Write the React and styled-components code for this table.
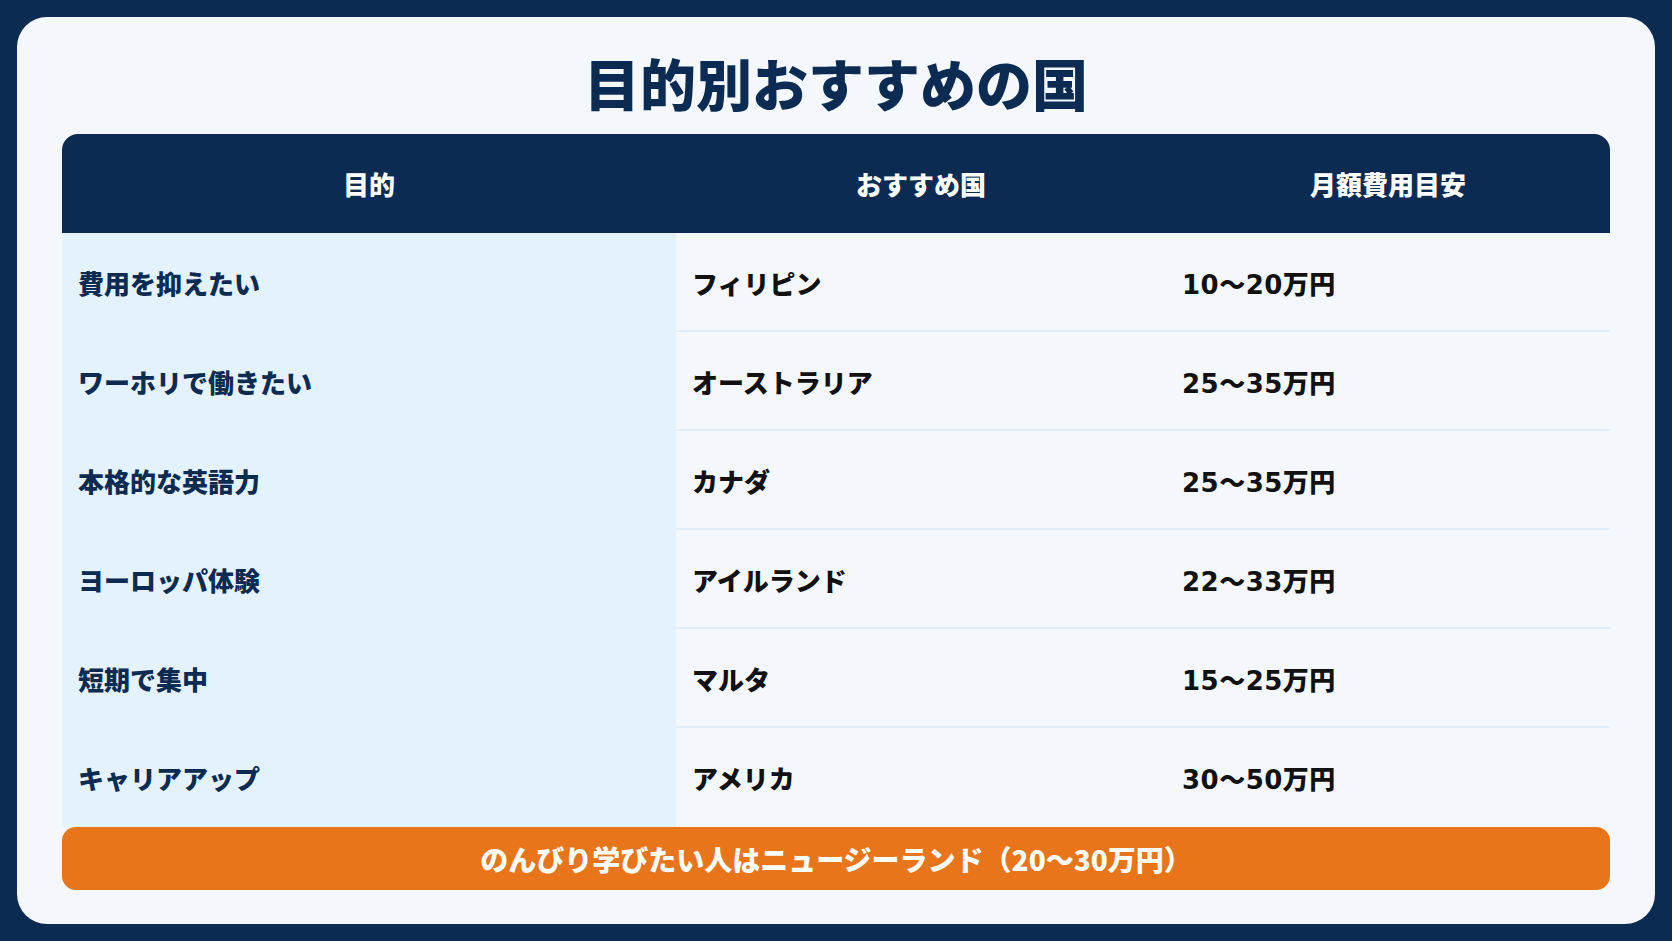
import React from "react";
import styled, { createGlobalStyle } from "styled-components";

const navy = "#0b2b52";

const GlobalStyle = createGlobalStyle`
  html, body {
    margin: 0;
    padding: 0;
    background: ${navy};
  }
  body {
    font-family: "Noto Sans CJK JP", "Noto Sans", sans-serif;
  }
  * {
    box-sizing: border-box;
  }
`;

const Page = styled.div`
  width: 1672px;
  height: 941px;
  padding: 17px;
  background: ${navy};
`;

const Card = styled.section`
  height: 100%;
  background: #f4f8fc;
  border-radius: 30px;
  padding: 31px 45px 34px;
  display: flex;
  flex-direction: column;
`;

const Title = styled.h1`
  margin: 0 0 19px;
  height: 67px;
  line-height: 67px;
  text-align: center;
  font-size: 56px;
  font-weight: 900;
  color: ${navy};
`;

const Table = styled.div`
  display: grid;
  grid-template-columns: 614px 490px 1fr;
  grid-auto-rows: 99px;
`;

const HeadCell = styled.div`
  background: ${navy};
  color: #fff;
  font-size: 26px;
  font-weight: 900;
  display: flex;
  align-items: center;
  justify-content: center;
  border-radius: ${({ $pos }) =>
    $pos === "first" ? "16px 0 0 0" : $pos === "last" ? "0 16px 0 0" : "0"};
`;

const Cell = styled.div`
  display: flex;
  align-items: center;
  padding: 0 16px;
  font-size: 26px;
  font-weight: 900;
  color: ${({ $purpose }) => ($purpose ? navy : "#111")};
  background: ${({ $purpose }) => ($purpose ? "#e3f2fd" : "#f4f8fc")};
  border-bottom: ${({ $purpose, $last }) =>
    $purpose || $last ? "none" : "2px solid #e2edf8"};
  padding-top: ${({ $purpose, $last }) => ($purpose || $last ? "0" : "2px")};
`;

const CostCell = styled(Cell)`
  font-family: "DejaVu Sans", "Noto Sans CJK JP", sans-serif;
  letter-spacing: 0.5px;
`;

const Footer = styled.div`
  height: 63px;
  background: #e8751a;
  border-radius: 14px;
  color: #fff;
  font-size: 28px;
  font-weight: 900;
  display: flex;
  align-items: center;
  justify-content: center;
`;

const rows = [
  ["費用を抑えたい", "フィリピン", "10〜20万円"],
  ["ワーホリで働きたい", "オーストラリア", "25〜35万円"],
  ["本格的な英語力", "カナダ", "25〜35万円"],
  ["ヨーロッパ体験", "アイルランド", "22〜33万円"],
  ["短期で集中", "マルタ", "15〜25万円"],
  ["キャリアアップ", "アメリカ", "30〜50万円"],
];

export default function App() {
  return (
    <>
      <GlobalStyle />
      <Page>
        <Card>
          <Title>目的別おすすめの国</Title>
          <Table>
            <HeadCell $pos="first">目的</HeadCell>
            <HeadCell>おすすめ国</HeadCell>
            <HeadCell $pos="last">月額費用目安</HeadCell>
            {rows.map(([purpose, country, cost], i) => {
              const last = i === rows.length - 1;
              return (
                <React.Fragment key={purpose}>
                  <Cell $purpose>{purpose}</Cell>
                  <Cell $last={last}>{country}</Cell>
                  <CostCell $last={last}>{cost}</CostCell>
                </React.Fragment>
              );
            })}
          </Table>
          <Footer>のんびり学びたい人はニュージーランド（20〜30万円）</Footer>
        </Card>
      </Page>
    </>
  );
}
